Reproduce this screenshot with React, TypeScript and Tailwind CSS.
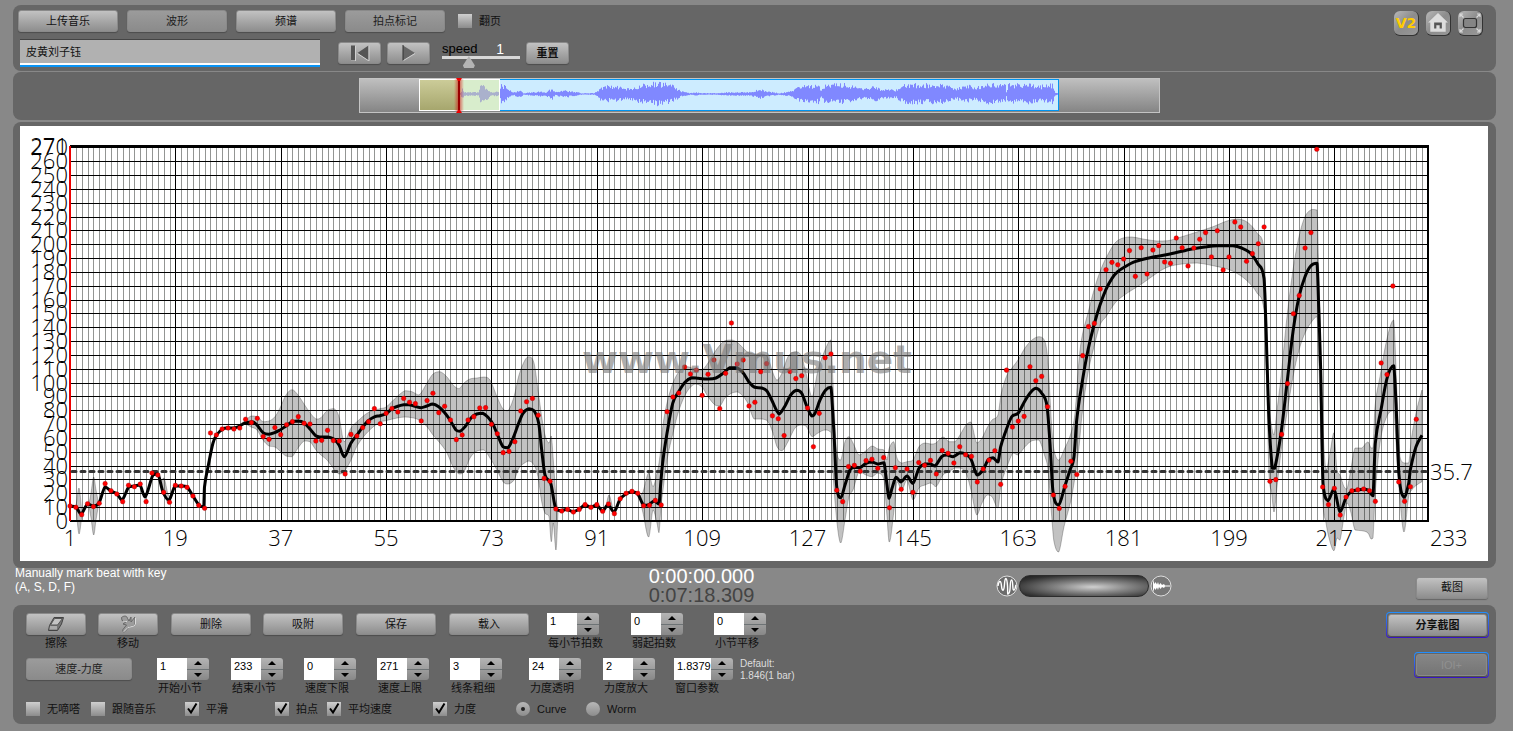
import { useState } from 'react';
import type { ReactNode } from 'react';
import clsx from 'clsx';

type Point = [number, number];

// plot frame inside the chart drawing
const LEFT = 70;
const RIGHT = 1428;
const TOP = 146;
const BOTTOM = 521;
const MAX_TEMPO = 271;
const LAST_BAR = 233;
const AVERAGE = 35.7;

const xOf = (bar: number) => LEFT + ((bar - 1) * (RIGHT - LEFT)) / (LAST_BAR - 1);
const yOf = (tempo: number) => BOTTOM - (tempo * (BOTTOM - TOP)) / MAX_TEMPO;

const BEATS = [
  10.8, 9.9, 4.6, 12.5, 10.4, 12.8, 27, 21.9, 19.5, 14, 25.8, 24.8, 26.7, 14, 34.7, 33.2, 20.7, 13.5, 25.8, 25.3,
  24.3, 18.1, 11.3, 9.2, 63.6, 62.2, 66.5, 67.2, 66.5, 67.2, 73.5, 71.1, 74.2, 61, 59, 67.5, 62.4, 69.6, 71.8, 75.4,
  70.6, 70.1, 57.8, 58.3, 65.5, 58.1, 57.8, 34, 62.6, 61.4, 67.5, 71.8, 81.2, 70.3, 77.8, 81.3, 78.8, 88.6, 85.8, 84.8,
  72.3, 87, 92.3, 78.3, 82.9, 73, 58.8, 62.2, 73, 75.4, 81.7, 81.9, 69.9, 63.1, 49.4, 50.3, 57.3, 79.5, 86.2, 88.6,
  76.4, 30.8, 28.7, 8.7, 7.2, 8.4, 6.5, 8.4, 11.8, 9.9, 11.8, 7, 12.3, 5.3, 16.1, 20, 21.4, 20, 11, 11.3,
  14.9, 11.6, 79, 89.6, 92.5, 111.3, 106.2, 109.1, 90.8, 106, 116.4, 81.2, 106.7, 143.1, 113.5, 116.4, 83.1, 85.8, 107.9, 113.7,
  76, 73.9, 61.7, 108.1, 102.9, 105, 81.7, 53.7, 77.8, 118, 120.7, 22.2, 14, 39.3, 40.2, 35.9, 43.6, 44.6, 38.1, 45.8,
  9.6, 38.5, 22.9, 37.6, 20.7, 42.2, 40.2, 43.8, 34, 51, 48.9, 41.9, 53.7, 47.9, 46.7, 28.2, 37.6, 44, 50.8, 26.5,
  109, 67.9, 72.2, 75.6, 111.5, 101.4, 104.5, 82.6, 18.8, 9.1, 25, 43.1, 33.6, 119.5, 140.5, 142.8, 167.7, 181.6, 186.9, 185.2,
  189.3, 195.4, 176.8, 197.5, 178.5, 195.8, 199, 187.2, 186.2, 204.5, 197.5, 184.3, 197.3, 203.6, 208.4, 190.8, 209.8, 181.4, 190.8, 216.1,
  212.5, 187.7, 193.2, 200.4, 212.5, 28.7, 29.9, 62.6, 99.3, 149.8, 162.9, 197.3, 208.4, 268.6, 24.6, 11.8, 23.6, 4.3, 17.3, 21.9,
  22.6, 23.1, 21.9, 14.2, 114.2, 105.8, 169.8, 28.2, 14.2, 24.8, 73.5,
];

// smoothed tempo line
const CURVE: Point[] = [
  [70, 506], [76, 507], [81, 514], [87.5, 504], [93.7, 506], [99, 503], [105, 487], [111, 491], [117, 494], [122, 500],
  [128.7, 487], [134, 486], [140, 485], [145, 497], [153, 475], [158, 474], [163, 492], [169, 500], [175, 486], [181, 486],
  [187, 487], [193, 496], [199, 505], [203.7, 507], [204.5, 487], [208, 467], [213, 443], [216.7, 435], [222.7, 429], [228, 428],
  [234, 428], [239.7, 426], [245, 423], [253, 422], [257, 425], [263, 432.7], [268.7, 434.3], [274.7, 432.7], [280, 430], [286, 426],
  [292, 422], [298, 421], [304, 422.7], [310, 429], [315.7, 435.7], [321, 437], [328, 437], [333.7, 439], [339, 445], [344.3, 456.7],
  [351, 443], [357, 435], [362, 428], [368, 421], [375, 416.7], [380, 415.7], [386, 413.7], [391.7, 409], [397, 406.5], [403.7, 404.7],
  [409, 404.7], [415, 406.3], [421, 407.7], [427, 406], [432.7, 404], [438.7, 406.7], [444.7, 412.7], [450, 420], [456, 430], [460, 431.3],
  [465, 426.7], [471.7, 417.3], [476.7, 414], [482.7, 413.3], [488, 417.3], [493, 424.3], [498, 436], [503, 446.7], [508, 447.7], [513, 438.3],
  [518, 425], [523, 413.3], [529, 408.7], [534, 410.7], [538.7, 423.3], [541.7, 450], [545, 475], [550.7, 483.3], [555.7, 508.7], [561, 510.7],
  [567, 509.3], [573, 511.7], [579, 509.3], [585, 505], [590.7, 507.3], [596.7, 505], [602.7, 510.7], [608, 504.7], [614, 512], [620, 499.3],
  [626, 494], [632, 491.7], [637.7, 494], [643.7, 505.3], [649, 504.7], [654, 501], [659, 504], [661, 480], [663, 460], [667, 433.3],
  [672.7, 403.3], [678.7, 391.7], [685, 382.3], [691.7, 377.7], [698, 378.3], [708, 379], [716, 378], [723, 373.3], [730, 367.7], [736.7, 367.7],
  [743, 372.7], [748.7, 381.7], [754.7, 387.3], [761.7, 388], [766.7, 390.7], [771.7, 400], [776.7, 410.7], [779.3, 414], [785, 406], [790.7, 395],
  [796.7, 390.3], [801.7, 393.3], [806.7, 406], [811.7, 416], [815, 413.3], [820, 400], [825.7, 390], [831, 387.3], [832, 400], [834, 433.3],
  [836.7, 486.7], [840.7, 497.7], [845, 485], [850, 470], [854, 467.3], [860, 467.7], [866, 463.3], [872, 462], [877.7, 464], [884, 462.7],
  [886, 476.7], [889, 498.3], [892, 488.3], [896, 477.3], [901, 482], [907, 476], [913, 483.3], [919, 468.3], [925, 464], [930.7, 464],
  [935, 466], [941.7, 456.7], [946.7, 455], [953, 456.7], [960, 452.7], [965.7, 454], [971, 459.3], [977, 475], [983, 470], [988, 460],
  [993, 457.7], [998, 462], [1000.7, 446.7], [1005, 433.3], [1011.7, 416.7], [1018, 413.3], [1025, 400.7], [1030.7, 392.3], [1036, 388.3], [1041.7, 393.3],
  [1047, 406], [1050, 443.3], [1053, 491.7], [1058.7, 505], [1065, 485.7], [1070, 470], [1074, 456.7], [1076.7, 420], [1082, 383.3], [1088, 350],
  [1094, 325], [1100, 305], [1106, 289.3], [1112, 278.3], [1117.7, 271.7], [1125, 266.7], [1135, 261.7], [1150, 257.7], [1170, 254], [1193, 248.7],
  [1206.7, 246.7], [1218, 245.7], [1233, 245.7], [1241.7, 248], [1250, 252.7], [1258, 264], [1264, 278.3], [1266, 326.7], [1268.7, 413.3], [1272.3, 468.3],
  [1274.7, 468.3], [1281, 433.3], [1287, 383.3], [1293, 331.7], [1299, 296.7], [1305, 276.7], [1310.7, 266], [1317, 263.3], [1318.7, 306.7], [1320.7, 370],
  [1323, 483.3], [1328, 500.7], [1334, 489], [1340, 511.7], [1346, 497.7], [1352, 491], [1357.7, 490], [1363.7, 489.3], [1368, 490], [1373, 495.7],
  [1375.3, 443.3], [1381, 410], [1387, 378.3], [1393.7, 365.7], [1396, 403.3], [1399, 475], [1404, 497.3], [1408.7, 483.3], [1410.3, 470], [1416, 446.7],
  [1422, 435.3],
];

// dynamics bands: x, upper edge, lower edge
const BANDS: [number, number, number][][] = [
  [[76, 506, 508], [79, 488, 534], [82, 513, 515]],
  [[89, 504, 506], [91, 493, 518], [93.7, 477, 535], [96, 490, 520], [98.5, 503, 505]],
  [[160, 482, 484], [164, 478, 494], [168, 494, 503], [171, 497, 499]],
  [
    [240, 424, 425], [245, 421, 424], [251, 416, 427], [257, 416.7, 430], [263, 421.7, 440], [269, 421, 446], [275, 416.7, 447], [280, 408, 451],
    [286, 395, 456], [292, 389.7, 456.7], [298, 395, 448], [304, 404, 441], [310, 412.7, 441.7], [316, 419, 450], [321, 417.7, 455], [327, 410.7, 460],
    [334, 408.7, 469], [339, 416.7, 474], [344, 441.7, 471.7], [351, 428, 460], [357, 421.7, 446], [368, 412.7, 431.7], [380, 408.7, 422], [386, 407, 420.7],
    [397, 396.7, 418], [405, 390.7, 417], [412, 391.7, 417.7], [419, 395, 420], [427, 383, 426.7], [433, 374, 435], [440, 371.7, 443], [447, 377, 453],
    [453, 385, 466.7], [459, 388.7, 474], [464, 383, 471.7], [470, 379, 458], [477, 378, 451], [484, 377, 450], [490, 380, 458], [497, 396.7, 470],
    [503, 409, 481.7], [508, 410.7, 484], [514, 396.7, 480], [519, 375, 468], [525, 360, 462.7], [529, 356.7, 461], [534, 363, 465], [538, 390, 476.7],
    [541.7, 416.7, 501.7], [545, 435, 513], [549, 443, 516.7], [551.3, 436, 541.7], [553.3, 460, 523], [556, 496.7, 550], [558, 510, 513],
  ],
  [[606, 506, 508], [609, 495, 506], [613, 509, 511]],
  [
    [640, 496, 500], [643, 491.7, 513], [648.7, 473, 537], [653, 486.7, 510], [657, 473, 523], [659, 463, 532.7], [661, 446.7, 506.7], [663, 425, 490],
    [667, 403, 460], [673, 383, 433], [679, 371.7, 410], [687, 366.7, 391.7], [695, 369, 384], [702, 370, 387], [708, 363, 396.7], [715, 351.7, 405],
    [720, 345, 406], [725, 340.7, 398], [732, 340, 393], [738, 343, 392], [747, 351.7, 401.7], [754, 354, 419], [762, 354, 419], [768, 358, 421.7],
    [773, 373, 433], [777, 380, 446.7], [782, 373, 450.7], [788, 356.7, 441.7], [795, 351.7, 428], [801, 355, 425], [806, 373, 426], [812, 396.7, 436.7],
    [818, 370, 433], [825, 350, 430], [831, 340, 432.7], [833, 383, 473], [836.7, 451.7, 520], [840.7, 460, 543], [845, 441.7, 520], [849, 436.7, 496.7],
    [853, 443, 490], [859, 455, 471.7], [866, 450.7, 475], [872, 446, 476.7], [878, 449, 473], [884, 450, 480], [886.7, 460, 513], [889.3, 448, 542],
    [893.7, 441.7, 513], [897, 458, 481.7], [901.7, 463, 490], [907, 461.7, 480], [913, 460, 500], [919, 446.7, 488], [925, 443, 485], [931, 444, 483],
    [936, 443, 486.7], [943, 437, 475], [949, 441.7, 471.7], [955, 441.7, 468], [960, 435, 468], [966, 425, 473], [971, 422, 490], [976.7, 443, 515],
    [982, 438, 503], [987, 428, 495], [992, 420, 496.7], [998, 415, 508], [1001, 395, 485], [1007, 375, 466.7], [1013, 366.7, 453], [1018, 360, 455],
    [1025, 348, 446.7], [1032, 340, 440.7], [1039, 336.7, 440], [1045, 341.7, 456.7], [1048, 363, 470], [1051.7, 426.7, 516.7], [1054, 450, 541.7], [1058.7, 460, 552],
    [1064, 450, 526.7], [1071, 433, 500], [1075, 413, 476.7], [1079, 360, 446.7], [1082, 336.7, 415], [1088, 313, 373], [1094, 290, 346.7], [1100, 271.7, 325],
    [1106, 258, 316.7], [1115, 243, 303], [1123, 238, 296], [1132, 237, 290], [1143, 239, 283], [1157, 241, 273], [1168, 240.7, 267], [1182, 236.7, 264],
    [1197, 232, 263], [1213, 226.7, 265.7], [1227, 221, 269], [1238, 219, 274], [1248, 222.7, 281.7], [1257, 233, 293], [1264, 248, 310], [1266.7, 326.7, 386.7],
    [1269, 403, 473], [1271.7, 426.7, 493], [1274, 435, 512], [1276.7, 413, 490], [1281, 376.7, 451.7], [1287, 316.7, 413], [1293, 270, 376.7], [1299, 236.7, 350],
    [1305, 216.7, 333], [1311.7, 209.5, 321.7], [1317, 210, 316.7], [1319, 280, 366.7], [1322.7, 420, 496.7], [1326, 470, 523], [1330, 453, 541.7], [1334, 432.7, 550.7],
    [1337, 470, 538], [1340, 475, 540], [1344, 486.7, 516.7], [1347, 489, 503], [1350.7, 470, 511.7], [1355, 448, 530], [1361.7, 448, 530.7], [1368, 442, 533],
    [1371, 448, 539], [1373, 448, 538], [1375, 406.7, 496.7], [1380, 376.7, 443], [1386.7, 340, 416.7], [1393.7, 320, 410.7], [1396.7, 386.7, 453], [1400, 456.7, 500],
    [1404, 463, 532], [1408.7, 463, 496.7], [1411.7, 436.7, 490], [1416.7, 410, 485], [1422, 390, 481.7],
  ],
];

// x and half height of the audio overview
const ENVELOPE: Point[] = [
  [460, 1], [462, 6], [464, 2], [478, 2], [480, 11], [484, 9], [487, 6], [491, 2], [499, 3], [501, 10], [505, 9], [509, 4], [514, 2], [519, 5], [523, 1],
  [541, 3], [545, 2], [552, 6], [555, 2], [565, 4], [573, 3], [581, 1], [594, 1], [600, 7], [607, 9], [620, 8], [629, 6], [636, 9], [644, 11],
  [658, 13], [664, 12], [673, 9], [681, 3], [690, 1], [695, 2], [700, 1], [716, 1], [726, 2], [734, 2], [742, 2], [750, 2], [755, 4], [758, 6], [766, 3], [779, 1],
  [790, 3], [800, 9], [811, 9], [818, 11], [821, 4], [824, 10], [838, 11], [848, 11], [858, 6], [869, 6], [874, 11], [880, 5], [888, 5], [896, 5],
  [904, 11], [922, 11], [943, 11], [954, 6], [965, 10], [975, 8], [986, 11], [996, 11], [1005, 10], [1006, 3], [1008, 11], [1033, 11], [1038, 9], [1052, 11],
  [1055, 2], [1058, 1],
];

const between = (v: number, a: number, b: number) => Math.max(Math.min(a, b), Math.min(Math.max(a, b), v));

function smooth(points: Point[]) {
  return points
    .map((p, i) => {
      if (i === 0) return `${p[0]} ${p[1]}`;
      const a = points[i - 1];
      const before = points[i - 2] ?? a;
      const after = points[i + 1] ?? p;
      const dx = p[0] - a[0];
      const s1 = (p[1] - before[1]) / (p[0] - before[0] || 1);
      const s2 = (after[1] - a[1]) / (after[0] - a[0] || 1);
      // handles stay inside the segment, so steep drops do not overshoot
      const y1 = between(a[1] + (s1 * dx) / 3, a[1], p[1]);
      const y2 = between(p[1] - (s2 * dx) / 3, a[1], p[1]);
      return `C${(a[0] + dx / 3).toFixed(1)} ${y1.toFixed(1)} ${(p[0] - dx / 3).toFixed(1)} ${y2.toFixed(1)} ${p[0]} ${p[1]}`;
    })
    .join(' ');
}

function bandPath(band: [number, number, number][]) {
  const upper = band.map(([x, y]): Point => [x, y]);
  const lower = band.map(([x, , y]): Point => [x, y]).reverse();
  return `M${smooth(upper)} L${smooth(lower)}Z`;
}

function noise(n: number) {
  const s = Math.sin(n * 127.1 + 3.7) * 43758.5453;
  return s - Math.floor(s);
}

function wavePath() {
  let d = '';
  let k = 0;
  for (let x = 460; x < 1058; x++) {
    while (ENVELOPE[k + 1][0] <= x) k++;
    const [x0, h0] = ENVELOPE[k];
    const [x1, h1] = ENVELOPE[k + 1];
    const h = h0 + ((h1 - h0) * (x - x0)) / (x1 - x0);
    const up = Math.max(0.5, h * (0.5 + 0.5 * noise(x)));
    const down = Math.max(0.5, h * (0.45 + 0.5 * noise(x + 0.37)));
    d += `M${x + 0.5} ${(94 - up).toFixed(1)}V${(94 + down).toFixed(1)}`;
  }
  return d;
}

const TempoChart = () => {
  const minor = Array.from({ length: LAST_BAR }, (_, i) => i + 1);
  const major = minor.filter((n) => n % 18 === 1);
  const rows = Array.from({ length: 28 }, (_, i) => i * 10);

  return (
    <svg viewBox="20 126 1468 435" className="block w-full bg-white font-['Open_Sans','Noto_Sans',sans-serif] text-[22px] font-light">
      <path d={minor.map((n) => `M${Math.round(xOf(n)) + 0.5} ${TOP}V${BOTTOM}`).join('')} stroke="#939593" shapeRendering="crispEdges" />
      <path d={rows.map((v) => `M${LEFT} ${Math.round(yOf(v)) + 0.5}H${RIGHT}`).join('')} stroke="#000" shapeRendering="crispEdges" />
      <path d={major.map((n) => `M${Math.round(xOf(n)) + 0.5} ${TOP}V${BOTTOM}`).join('')} stroke="#000" shapeRendering="crispEdges" />
      <path d={`M${LEFT} 146.5H1429`} stroke="#000" strokeWidth="3" />
      <path d={`M${LEFT} ${BOTTOM}H1429M${RIGHT} ${TOP}V${BOTTOM + 1}`} stroke="#000" strokeWidth="2" />
      <path d={`M${LEFT} ${TOP}V${BOTTOM}`} stroke="#e00" strokeWidth="2" />

      <g fill="#000" textAnchor="end">
        {rows.map((v) => (
          <text key={v} x="68" y={yOf(v) + 8}>{v}</text>
        ))}
        <text x="68" y={yOf(MAX_TEMPO) + 8}>{MAX_TEMPO}</text>
      </g>
      <g fill="#000" textAnchor="middle">
        {major.map((n) => (
          <text key={n} x={xOf(n)} y="546">{n}</text>
        ))}
      </g>
      <text x="1430" y="546">{LAST_BAR}</text>
      <text x="1430" y="480">{AVERAGE}</text>

      {BANDS.map((band, i) => (
        <path key={i} d={bandPath(band)} fill="#000" fillOpacity="0.24" stroke="#000" strokeOpacity="0.25" />
      ))}
      <path d={`M${LEFT + 2} 471.5H1427`} stroke="#333" strokeWidth="3" strokeLinecap="round" strokeDasharray="4 5" />
      <path d={`M${smooth(CURVE)}`} fill="none" stroke="#000" strokeWidth="3" strokeLinejoin="round" />
      <g fill="#f00" stroke="#a00000" strokeOpacity="0.4">
        {BEATS.map((v, i) => (
          <circle key={i} cx={xOf(i + 1)} cy={yOf(v)} r="2.3" />
        ))}
      </g>
      <text x="747" y="373" textAnchor="middle" fill="#777" fillOpacity="0.6" className="font-['DejaVu_Sans',sans-serif] text-[39px] font-bold">
        www.Vmus.net
      </text>
    </svg>
  );
};

const Overview = () => (
  <svg viewBox="359 78 801 35" className="block w-[801px]">
    <defs>
      <linearGradient id="track" x2="0" y2="1">
        <stop offset="0" stopColor="#c0c0c0" />
        <stop offset="1" stopColor="#848484" />
      </linearGradient>
      <linearGradient id="past" x2="0" y2="1">
        <stop offset="0" stopColor="#cdcd9a" />
        <stop offset="1" stopColor="#a5a56c" />
      </linearGradient>
      <linearGradient id="glow">
        <stop offset="0" stopColor="#d00" stopOpacity="0" />
        <stop offset="0.5" stopColor="#c00" stopOpacity="0.6" />
        <stop offset="1" stopColor="#d00" stopOpacity="0" />
      </linearGradient>
    </defs>
    <rect x="359.5" y="78.5" width="800" height="34" fill="url(#track)" stroke="#c4c4c4" />
    <rect x="459.5" y="79.5" width="599" height="31" fill="#cdecff" stroke="#0094f0" />
    <path d={wavePath()} stroke="#8088ff" />
    <rect x="459" y="79" width="41" height="32" fill="#e8f080" fillOpacity="0.4" />
    <rect x="419" y="79" width="41" height="32" fill="url(#past)" />
    <rect x="419.5" y="79.5" width="80" height="31" fill="none" stroke="#fff" />
    <rect x="454" y="79" width="10" height="32" fill="url(#glow)" />
    <path d="M459 79V112" stroke="#900" strokeWidth="2" />
    <path d="M456 78h6l-2 3h-2zM456 113h6l-2-3h-2z" fill="#e00" />
  </svg>
);

const buttonBase =
  'flex h-[22px] items-center justify-center rounded-[3px] border border-[#8a8a8a] text-[11px] shadow-[0_1px_1px_#00000040]';

const Button = ({ className, on, children }: { className?: string; on?: boolean; children: ReactNode }) => (
  <button
    type="button"
    className={clsx(
      buttonBase,
      on ? 'bg-linear-to-b from-[#9b9b9b] to-[#8b8b8b] text-[#222]' : 'bg-linear-to-b from-[#c2c2c2] to-[#8e8e8e] text-[#111]',
      className,
    )}
  >
    {children}
  </button>
);

const Check = ({ label, checked = false, className }: { label: string; checked?: boolean; className?: string }) => (
  <label className={clsx('flex items-center gap-[7px] whitespace-nowrap text-[11px] text-[#111]', className)}>
    <span className="relative size-[14px]">
      <input
        type="checkbox"
        defaultChecked={checked}
        className="peer block size-[14px] appearance-none bg-linear-to-b from-[#cfcfcf] to-[#8c8c8c]"
      />
      <svg viewBox="0 0 14 14" className="pointer-events-none absolute inset-0 hidden peer-checked:block">
        <path d="M3 6.5 6 10.5 11.5 1.5" fill="none" stroke="#000" strokeWidth="2" />
      </svg>
    </span>
    {label}
  </label>
);

const Radio = ({ label, checked = false, className }: { label: string; checked?: boolean; className?: string }) => (
  <label className={clsx('flex items-center gap-[7px] text-[11px] text-[#111]', className)}>
    <span className="relative size-[14px]">
      <input
        type="radio"
        name="plot"
        defaultChecked={checked}
        className="peer block size-[14px] appearance-none rounded-full bg-linear-to-b from-[#b8b8b8] to-[#8c8c8c]"
      />
      <span className="pointer-events-none absolute inset-[5px] hidden rounded-full bg-[#222] peer-checked:block" />
    </span>
    {label}
  </label>
);

const Stepper = ({ id, label, initial, wide, className }: { id: string; label: string; initial: string; wide?: boolean; className?: string }) => {
  const [value, setValue] = useState(initial);
  const step = (d: number) => setValue(String(Number(value) + d));

  return (
    <div className={clsx(wide ? 'w-[59px]' : 'w-[52px]', className)}>
      <div className="flex h-[22px]">
        <input
          id={id}
          value={value}
          onChange={(e) => setValue(e.target.value)}
          className="h-[22px] min-w-0 flex-1 bg-white pb-[6px] pl-[3px] text-[11px] leading-4 text-black"
        />
        <div className="flex w-[22px] flex-col overflow-hidden rounded-r-[3px] bg-linear-to-b from-[#b4b4b4] to-[#888]">
          <button type="button" onClick={() => step(1)} className="flex flex-1 items-center justify-center border-b border-[#6d7375]">
            <svg viewBox="0 0 8 4" className="w-2"><path d="M0 4 4 0l4 4z" /></svg>
          </button>
          <button type="button" onClick={() => step(-1)} className="flex flex-1 items-center justify-center">
            <svg viewBox="0 0 8 4" className="w-2"><path d="M0 0h8L4 4z" /></svg>
          </button>
        </div>
      </div>
      <label htmlFor={id} className="block pl-px text-[11px] leading-4 whitespace-nowrap text-[#111]">{label}</label>
    </div>
  );
};

const IconButton = ({ children }: { children: ReactNode }) => (
  <button
    type="button"
    className="flex size-[25px] items-center justify-center rounded-[6px] border-r border-b border-[#333] bg-linear-to-br from-[#b8b8b8] via-[#8c8c8c] to-[#999]"
  >
    {children}
  </button>
);

const panel = 'rounded-lg bg-[#666]';

export default function App() {
  return (
    <main className="min-h-screen bg-[#888] pt-[5px] pr-[17px] pb-[7px] pl-[13px] font-['Liberation_Sans','Noto_Sans_CJK_SC',sans-serif]">
      <header className={clsx(panel, 'flex h-[66px] justify-between px-[5px] pt-[5px]')}>
        <div>
          <div className="flex gap-[9px]">
            <Button className="w-[100px]">上传音乐</Button>
            <Button on className="w-[100px]">波形</Button>
            <Button className="w-[100px]">频谱</Button>
            <Button on className="w-[100px]">拍点标记</Button>
            <Check label="翻页" className="ml-1" />
          </div>
          <div className="flex items-center pt-[6px] pl-[2px]">
            <input
              defaultValue="皮黄刘子钰"
              className="h-7 w-[300px] border-t border-b-2 border-t-[#444] border-b-[#0a94f5] bg-[#b1b1b1] pb-1 pl-[6px] text-[11px] text-[#111] shadow-[inset_0_-2px_0_#fff]"
            />
            <Button className="ml-[18px] w-[43px]">
              <svg viewBox="0 0 22 16" className="w-[22px]">
                <path d="M2 0.5h4v15H2zM19.500.5v15L8.500 8z" fill="#555" />
                <path d="M6.500 1v15H2M20 .5v15.500L8.500 8.500" fill="none" stroke="#d0d0d0" />
              </svg>
            </Button>
            <Button className="ml-[6px] w-[43px]">
              <svg viewBox="0 0 14 16" className="w-[14px]">
                <path d="M1 .5v15L13 8z" fill="#666" />
                <path d="M1 0v15.500" stroke="#333" />
                <path d="M1.500 15.500 13 8.500" stroke="#d0d0d0" />
              </svg>
            </Button>
            <div className="ml-3 w-[78px] pt-1">
              <div className="flex h-[14px] items-center justify-between pr-4 text-[13px]">
                <label htmlFor="speed">speed</label>
                <span className="text-sm text-white">1</span>
              </div>
              <input
                id="speed"
                type="range"
                min="0"
                max="3"
                step="0.01"
                defaultValue="0.95"
                className="block h-3 w-full appearance-none bg-linear-to-b from-[#d8d8d8] to-[#d8d8d8] bg-size-[100%_3px] bg-top bg-no-repeat [&::-webkit-slider-thumb]:h-3 [&::-webkit-slider-thumb]:w-[12px] [&::-webkit-slider-thumb]:appearance-none [&::-webkit-slider-thumb]:bg-[#b4b4b4] [&::-webkit-slider-thumb]:[clip-path:polygon(50%_0,100%_80%,90%_100%,10%_100%,0_80%)]"
              />
            </div>
            <Button className="ml-[6px] w-[43px] font-bold">重置</Button>
          </div>
        </div>
        <div className="flex gap-[7px] pt-px pr-2">
          <IconButton>
            <span className="font-['DejaVu_Sans',sans-serif] text-[14px] font-bold text-[#ffcc00]">V2</span>
          </IconButton>
          <IconButton>
            <svg viewBox="0 0 20 20" className="w-[22px]">
              <path d="M10 1 19 9.500H17V18H3V9.500H1z" fill="#ddd" />
              <path d="M6.500 9.500h7V15h-2v-3h-3v3h-2z" fill="#555" />
            </svg>
          </IconButton>
          <IconButton>
            <svg viewBox="0 0 22 22" className="w-[22px]">
              <rect x="4.500" y="6.500" width="13" height="9" rx="2" fill="#858585" stroke="#333" strokeWidth="1.200" />
              <path d="M4.500 5.500 1 2M1 5V2h3M17.500 5.500 21 2M18 2h3v3M4.500 16.500 1 20M1 17v3h3M17.500 16.500 21 20M21 17v3h-3" fill="none" stroke="#d8d8d8" strokeWidth="1.200" />
            </svg>
          </IconButton>
        </div>
      </header>

      <section className={clsx(panel, 'mt-px flex h-12 items-start justify-center pt-[6px] pl-[10px]')}>
        <Overview />
      </section>

      <section className={clsx(panel, 'mt-[2px] pt-1 pr-2 pb-[7px] pl-[7px]')}>
        <TempoChart />
      </section>

      <section className="grid h-[37px] grid-cols-[6fr_1fr_7fr]">
        <p className="-mt-[2px] pl-[2px] text-[12px] leading-[14px] text-white">
          Manually mark beat with key
          <br />
          (A, S, D, F)
        </p>
        <div className="-mt-px text-center text-[20px] leading-[19px]">
          <div className="text-white">0:00:00.000</div>
          <div className="text-[#444]">0:07:18.309</div>
        </div>
        <div className="flex items-center justify-between pr-2 pl-[242px]">
          <div className="flex items-center gap-px pb-[2px]">
            <svg viewBox="0 0 22 22" className="w-[22px]">
              <circle cx="11" cy="11" r="10" fill="#6c6c6c" stroke="#ddd" />
              <path d="M2 11C3 5 5 5 5.500 11S8 17 8.500 9 11 2 11.500 11 11 20 13 18 13.500 5 15.500 5 16 16 18 15 19 11 20 10" fill="none" stroke="#fff" strokeWidth="1.400" />
            </svg>
            <div className="h-[22px] w-[130px] rounded-full border border-[#2c2c2c] bg-[radial-gradient(ellipse_at_57%_55%,#d0d0d0,#858585_35%,#303030_80%,#1c1c1c)]" />
            <svg viewBox="0 0 22 22" className="w-[22px]">
              <circle cx="11" cy="11" r="10" fill="#777" stroke="#ddd" />
              <path d="M3 5 4.500 9 5.500 7 7 9.500 8 7 9 10 10.500 8 12 10 14 9 15 10.500H20V11.500H15L14 13 12 12 10.500 14 9 12 8 15 7 12.500 5.500 15 4.500 13 3 17z" fill="#fff" />
            </svg>
          </div>
          <Button className="mt-[2px] w-[72px]">截图</Button>
        </div>
      </section>

      <section className={clsx(panel, 'flex justify-between pt-2 pr-[7px] pb-2 pl-[13px]')}>
        <div>
          <div className="flex">
            <div className="w-[60px] text-center text-[11px] leading-4 text-[#111]">
              <Button className="w-full">
                <svg viewBox="0 0 18 16" className="w-[18px]">
                  <path d="M7 1.500h9.500L14.500 8l-4 6.500h-9l1-5z" fill="#777" stroke="#444" />
                  <path d="M7.500 2.500h8L10.500 9h-7z" fill="#c4c4c4" stroke="#555" />
                  <path d="M3 10h7v3.500H2.500z" fill="#aaa" />
                </svg>
              </Button>
              擦除
            </div>
            <div className="ml-3 w-[60px] text-center text-[11px] leading-4 text-[#111]">
              <Button className="w-full">
                <svg viewBox="0 0 18 18" className="w-[18px]">
                  <path d="M2.500 2.500C5 .5 8 .5 8.500 3.500L10 6l2-4v5l4-5v7c-1 3-4 2-6 3l-4 4.500c-1.500 1-3 0-2-2L7.500 10 4 9l3.500-2.500L3 5.500z" fill="#9c9c9c" stroke="#666" strokeLinejoin="round" />
                  <path d="M4.500 17 9 12.500l6-1.500 1.500-2V2.500M4 6l4 .5" fill="none" stroke="#dcdcdc" />
                </svg>
              </Button>
              移动
            </div>
            <Button className="ml-[13px] w-[80px]">删除</Button>
            <Button className="ml-3 w-[80px]">吸附</Button>
            <Button className="ml-[13px] w-[80px]">保存</Button>
            <Button className="ml-[13px] w-[80px]">载入</Button>
            <Stepper id="beats" label="每小节拍数" initial="1" className="ml-[18px]" />
            <Stepper id="pickup" label="弱起拍数" initial="0" className="ml-8" />
            <Stepper id="shift" label="小节平移" initial="0" className="ml-[31px]" />
          </div>

          <div className="mt-[7px] flex">
            <Button on className="w-[106px]">速度-力度</Button>
            <Stepper id="from" label="开始小节" initial="1" className="ml-[25px]" />
            <Stepper id="to" label="结束小节" initial="233" className="ml-[22px]" />
            <Stepper id="low" label="速度下限" initial="0" className="ml-[21px]" />
            <Stepper id="high" label="速度上限" initial="271" className="ml-[21px]" />
            <Stepper id="line" label="线条粗细" initial="3" className="ml-[21px]" />
            <Stepper id="alpha" label="力度透明" initial="24" className="ml-[27px]" />
            <Stepper id="zoom" label="力度放大" initial="2" className="ml-[22px]" />
            <Stepper id="window" label="窗口参数" initial="1.8379" wide className="ml-[19px]" />
            <p className="ml-[7px] text-[10px] leading-3 text-[#ddd]">
              Default:
              <br />
              1.846(1 bar)
            </p>
          </div>

          <div className="mt-[6px] flex h-[14px] items-center">
            <Check label="无嘀嗒" className="w-[65px]" />
            <Check label="跟随音乐" className="w-[94px]" />
            <Check label="平滑" checked className="w-[90px]" />
            <Check label="拍点" checked className="w-[52px]" />
            <Check label="平均速度" checked className="w-[106px]" />
            <Check label="力度" checked className="w-[83px]" />
            <Radio label="Curve" checked className="w-[70px]" />
            <Radio label="Worm" />
          </div>
        </div>

        <div className="-mt-px flex flex-col items-end gap-[14px]">
          <div className="rounded-[4px] bg-linear-to-b from-[#2090ff] to-[#3a10c8] p-px">
            <div className="rounded-[3px] bg-[#666] p-px">
              <Button className="w-[99px] font-bold">分享截图</Button>
            </div>
          </div>
          <div className="rounded-[4px] bg-linear-to-b from-[#2090ff] to-[#3a10c8] p-px">
            <div className="rounded-[3px] bg-[#666] p-px">
              <button type="button" disabled className={clsx(buttonBase, 'w-[71px] bg-linear-to-b from-[#868686] to-[#757575] text-[#909090]')}>
                IOI+
              </button>
            </div>
          </div>
        </div>
      </section>
    </main>
  );
}
